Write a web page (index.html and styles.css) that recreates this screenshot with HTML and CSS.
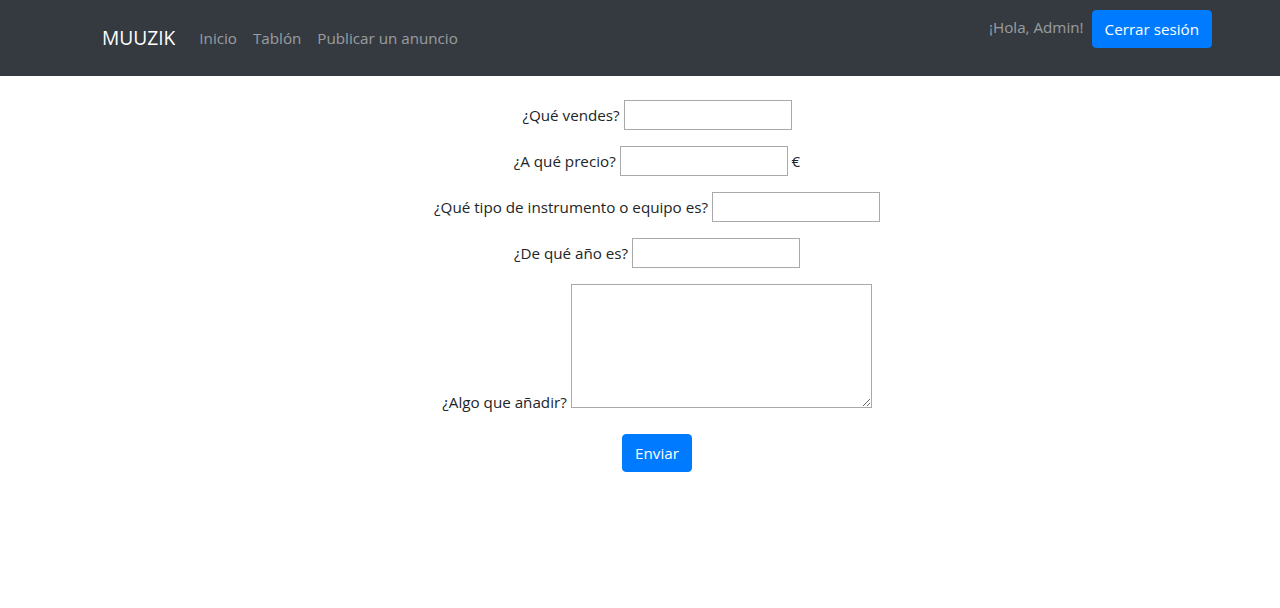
FILE: index.html
```html
<!DOCTYPE html>
<html lang="es">
<head>
<meta charset="utf-8">
<title>MUUZIK</title>
<link rel="stylesheet" href="styles.css">
</head>
<body>
<header class="navbar">
  <div class="shell">
    <nav class="nav-inner">
      <div class="nav-left">
        <a class="brand" href="#">MUUZIK</a>
        <a class="nav-link" href="#">Inicio</a>
        <a class="nav-link" href="#">Tablón</a>
        <a class="nav-link" href="#">Publicar un anuncio</a>
      </div>
      <div class="nav-right">
        <span class="greeting">¡Hola, Admin!</span>
        <button class="btn" type="button">Cerrar sesión</button>
      </div>
    </nav>
  </div>
</header>
<main class="shell">
  <form class="ad-form">
    <p class="row"><label>¿Qué vendes?</label> <input type="text" class="field"></p>
    <p class="row"><label>¿A qué precio?</label> <input type="text" class="field"> <span class="unit">€</span></p>
    <p class="row"><label>¿Qué tipo de instrumento o equipo es?</label> <input type="text" class="field"></p>
    <p class="row"><label>¿De qué año es?</label> <input type="text" class="field"></p>
    <p class="row row-area"><label>¿Algo que añadir?</label> <textarea class="area"></textarea></p>
    <p class="row row-submit"><button class="btn" type="submit">Enviar</button></p>
  </form>
</main>
</body>
</html>
```
FILE: styles.css
```css
* { box-sizing: border-box; }
body {
  margin: 0;
  font-family: "Open Sans", "Noto Sans", sans-serif;
  font-size: 15.2px;
  line-height: 24px;
  color: #212529;
  background: #fff;
}
.shell { padding-left: 34px; }
.navbar { background: #343a40; height: 76px; }
.nav-inner {
  max-width: 1110px;
  margin: 0 auto;
  display: flex;
  justify-content: space-between;
  height: 76px;
}
.nav-left { display: flex; align-items: center; }
.brand {
  color: #fff;
  font-size: 19.2px;
  line-height: 30px;
  text-decoration: none;
  margin-right: 16px;
}
.nav-link {
  color: rgba(255,255,255,.5);
  text-decoration: none;
  padding: 8px;
}
.nav-right { display: flex; align-items: flex-start; padding-top: 10px; }
.greeting { color: rgba(255,255,255,.5); padding-top: 5px; margin-right: 8px; }
.btn {
  font-family: inherit;
  font-size: 15.2px;
  line-height: 24px;
  color: #fff;
  background: #007bff;
  border: 1px solid #007bff;
  border-radius: 4px;
  padding: 6px 12px;
}
.ad-form { text-align: center; padding-top: 24px; }
.row { margin: 0 0 16px; }
.field {
  width: 168px;
  height: 30px;
  border: 1px solid #a9a9a9;
  font: inherit;
  padding: 1px 2px;
  vertical-align: baseline;
}
.area {
  width: 301px;
  height: 124px;
  border: 1px solid #a9a9a9;
  font: inherit;
  vertical-align: baseline;
  margin: 0;
}
.row-area { margin-bottom: 20px; }
```
